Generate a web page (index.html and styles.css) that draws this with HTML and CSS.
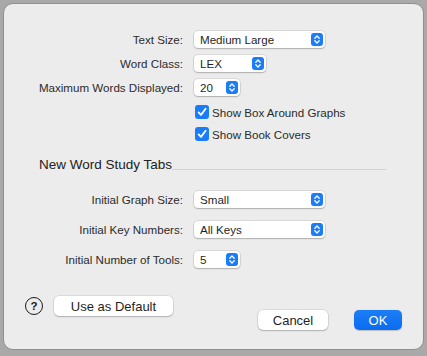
FILE: index.html
```html
<!DOCTYPE html>
<html>
<head>
  <title>Preferences</title>
  <link rel="stylesheet" href="styles.css">
</head>
<body>
  <div class="dialog">

    <div class="row first">
      <span class="label">Text Size:</span>
      <div class="popup wide">Medium Large
        <svg class="stepper" width="12" height="13" viewBox="0 0 12 13"><rect width="12" height="13" rx="3" fill="#1a7cf6"/><path d="M3.8 5.2 L6 3 L8.2 5.2 M3.8 7.8 L6 10 L8.2 7.8" stroke="#fff" stroke-width="1.3" fill="none" stroke-linecap="round" stroke-linejoin="round"/></svg>
      </div>
    </div>
    <div class="row">
      <span class="label">Word Class:</span>
      <div class="popup medium">LEX
        <svg class="stepper" width="12" height="13" viewBox="0 0 12 13"><rect width="12" height="13" rx="3" fill="#1a7cf6"/><path d="M3.8 5.2 L6 3 L8.2 5.2 M3.8 7.8 L6 10 L8.2 7.8" stroke="#fff" stroke-width="1.3" fill="none" stroke-linecap="round" stroke-linejoin="round"/></svg>
      </div>
    </div>
    <div class="row">
      <span class="label">Maximum Words Displayed:</span>
      <div class="popup small">20
        <svg class="stepper" width="12" height="13" viewBox="0 0 12 13"><rect width="12" height="13" rx="3" fill="#1a7cf6"/><path d="M3.8 5.2 L6 3 L8.2 5.2 M3.8 7.8 L6 10 L8.2 7.8" stroke="#fff" stroke-width="1.3" fill="none" stroke-linecap="round" stroke-linejoin="round"/></svg>
      </div>
    </div>

    <div class="check first-check">
      <svg class="box" width="14" height="14" viewBox="0 0 14 14"><rect width="14" height="14" rx="3" fill="#1a7cf6"/><path d="M3.6 7.4 L6 9.9 L10.6 3.8" stroke="#fff" stroke-width="1.8" fill="none" stroke-linecap="round" stroke-linejoin="round"/></svg>
      <span>Show Box Around Graphs</span>
    </div>
    <div class="check">
      <svg class="box" width="14" height="14" viewBox="0 0 14 14"><rect width="14" height="14" rx="3" fill="#1a7cf6"/><path d="M3.6 7.4 L6 9.9 L10.6 3.8" stroke="#fff" stroke-width="1.8" fill="none" stroke-linecap="round" stroke-linejoin="round"/></svg>
      <span>Show Book Covers</span>
    </div>

    <div class="section-title">
      <span>New Word Study Tabs</span>
      <div class="rule"></div>
    </div>

    <div class="row after-title">
      <span class="label">Initial Graph Size:</span>
      <div class="popup wide">Small
        <svg class="stepper" width="12" height="13" viewBox="0 0 12 13"><rect width="12" height="13" rx="3" fill="#1a7cf6"/><path d="M3.8 5.2 L6 3 L8.2 5.2 M3.8 7.8 L6 10 L8.2 7.8" stroke="#fff" stroke-width="1.3" fill="none" stroke-linecap="round" stroke-linejoin="round"/></svg>
      </div>
    </div>
    <div class="row spaced">
      <span class="label">Initial Key Numbers:</span>
      <div class="popup wide">All Keys
        <svg class="stepper" width="12" height="13" viewBox="0 0 12 13"><rect width="12" height="13" rx="3" fill="#1a7cf6"/><path d="M3.8 5.2 L6 3 L8.2 5.2 M3.8 7.8 L6 10 L8.2 7.8" stroke="#fff" stroke-width="1.3" fill="none" stroke-linecap="round" stroke-linejoin="round"/></svg>
      </div>
    </div>
    <div class="row spaced">
      <span class="label">Initial Number of Tools:</span>
      <div class="popup small">5
        <svg class="stepper" width="12" height="13" viewBox="0 0 12 13"><rect width="12" height="13" rx="3" fill="#1a7cf6"/><path d="M3.8 5.2 L6 3 L8.2 5.2 M3.8 7.8 L6 10 L8.2 7.8" stroke="#fff" stroke-width="1.3" fill="none" stroke-linecap="round" stroke-linejoin="round"/></svg>
      </div>
    </div>

    <div class="footer">
      <div class="footer-left">
        <span class="help">?</span>
        <button class="btn default-btn">Use as Default</button>
      </div>
      <div class="footer-right">
        <button class="btn cancel-btn">Cancel</button>
        <button class="btn ok-btn">OK</button>
      </div>
    </div>

  </div>
</body>
</html>
```

FILE: styles.css
```css
body {
  margin: 0;
  height: 356px;
  background: #a9a9a9;
  font-family: "Liberation Sans", Arial, sans-serif;
  font-size: 11.6px;
  color: #2b2b2b;
  overflow: hidden;
}

.dialog {
  box-sizing: border-box;
  width: 421px;
  height: 347px;
  margin: 3px 0 0 3px;
  background: #ececec;
  border: 1px solid #8f8f8f;
  border-radius: 10px;
  display: flex;
  flex-direction: column;
}

.row {
  display: flex;
  align-items: center;
  height: 17px;
  margin-top: 7px;
}

.row.first {
  margin-top: 27px;
}

.row.after-title {
  margin-top: 18px;
}

.row.spaced {
  margin-top: 13px;
}

.label {
  width: 179px;
  margin-right: 11px;
  text-align: right;
  white-space: nowrap;
}

.popup {
  box-sizing: border-box;
  height: 17px;
  padding: 0 2px 0 6px;
  background: #fff;
  border-radius: 4px;
  box-shadow: 0 0 0 0.5px rgba(0, 0, 0, 0.16), 0 1px 1.5px rgba(0, 0, 0, 0.2);
  display: flex;
  align-items: center;
  justify-content: space-between;
  color: #1f1f1f;
}

.popup.wide {
  width: 131px;
}

.popup.medium {
  width: 72px;
}

.popup.small {
  width: 46px;
}

.check {
  display: flex;
  align-items: center;
  gap: 3px;
  height: 14px;
  margin-left: 191px;
  margin-top: 8px;
}

.check.first-check {
  margin-top: 9px;
}

.section-title {
  display: flex;
  align-items: flex-end;
  margin: 16px 37px 0 35px;
  font-size: 13.5px;
  line-height: 16px;
  color: #222;
}

.rule {
  flex: 1;
  height: 1px;
  margin-bottom: 3px;
  background: #d2d2d2;
}

.footer {
  display: flex;
  justify-content: space-between;
  margin: 28px 21px 0 21px;
  height: 34px;
}

.footer-left {
  display: flex;
  align-items: center;
  gap: 11px;
  height: 20px;
}

.footer-right {
  display: flex;
  align-items: flex-end;
  gap: 26px;
}

.help {
  box-sizing: border-box;
  width: 18px;
  height: 18px;
  border: 1.7px solid #1a1a1a;
  border-radius: 50%;
  display: flex;
  align-items: center;
  justify-content: center;
  font-size: 11.5px;
  font-weight: bold;
  color: #1a1a1a;
}

.btn {
  height: 20px;
  padding: 0;
  border: none;
  border-radius: 5px;
  background: #fff;
  box-shadow: 0 0 0 0.5px rgba(0, 0, 0, 0.14), 0 1px 1.5px rgba(0, 0, 0, 0.2);
  font-family: "Liberation Sans", Arial, sans-serif;
  font-size: 13px;
  color: #1f1f1f;
}

.default-btn {
  width: 119px;
}

.cancel-btn {
  width: 70px;
}

.ok-btn {
  width: 48px;
  background: linear-gradient(#1d7ef7, #0a6cf0);
  color: #fff;
  box-shadow: 0 0.5px 1px rgba(0, 0, 0, 0.2);
}
```
